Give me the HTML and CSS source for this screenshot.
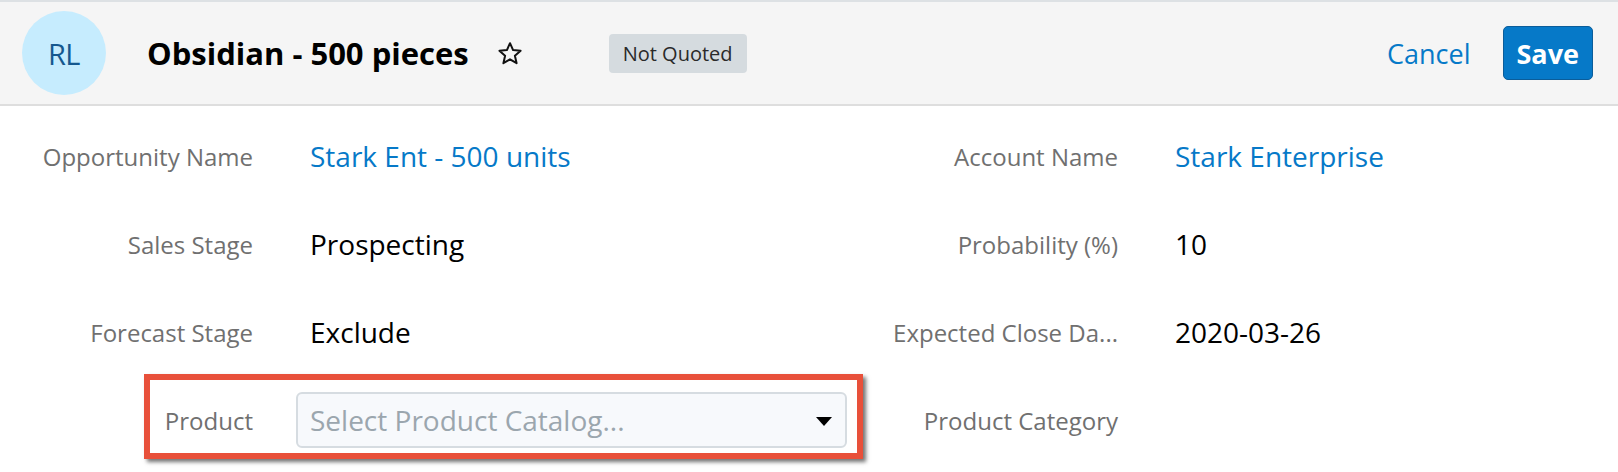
FILE: index.html
```html
<!DOCTYPE html>
<html lang="en">
<head>
<meta charset="utf-8">
<title>Obsidian - 500 pieces</title>
<link rel="stylesheet" href="styles.css">
</head>
<body>
<div class="record">
  <header class="record-header">
    <div class="avatar">RL</div>
    <h1 class="record-title">Obsidian - 500 pieces</h1>
    <span class="favorite" aria-label="Favorite">
      <svg width="26" height="25" viewBox="0 0 26 25" aria-hidden="true">
        <path d="M13 2.2 L16.1 9.1 L23.6 9.8 L17.9 14.8 L19.6 22.2 L13 18.3 L6.4 22.2 L8.1 14.8 L2.4 9.8 L9.9 9.1 Z" fill="none" stroke="#111" stroke-width="2" stroke-linejoin="round"/>
      </svg>
    </span>
    <span class="badge">Not Quoted</span>
    <div class="header-actions">
      <a class="btn-link" href="#">Cancel</a>
      <button class="btn-primary" type="button">Save</button>
    </div>
  </header>

  <section class="fields">
    <div class="field">
      <div class="field-label">Opportunity Name</div>
      <div class="field-value"><a class="link" href="#">Stark Ent - 500 units</a></div>
    </div>
    <div class="field">
      <div class="field-label">Account Name</div>
      <div class="field-value"><a class="link" href="#">Stark Enterprise</a></div>
    </div>

    <div class="field">
      <div class="field-label">Sales Stage</div>
      <div class="field-value">Prospecting</div>
    </div>
    <div class="field">
      <div class="field-label">Probability (%)</div>
      <div class="field-value">10</div>
    </div>

    <div class="field">
      <div class="field-label">Forecast Stage</div>
      <div class="field-value">Exclude</div>
    </div>
    <div class="field">
      <div class="field-label">Expected Close Da...</div>
      <div class="field-value">2020-03-26</div>
    </div>

    <div class="field field-highlight">
      <div class="field-label">Product</div>
      <div class="field-value field-value-edit">
        <div class="select">
          <span class="select-placeholder">Select Product Catalog...</span>
          <span class="select-caret"></span>
        </div>
      </div>
    </div>
    <div class="field">
      <div class="field-label">Product Category</div>
      <div class="field-value"></div>
    </div>
  </section>
</div>
</body>
</html>
```

FILE: styles.css
```css
* { box-sizing: border-box; }

html, body {
  margin: 0;
  padding: 0;
  background: #ffffff;
}

body {
  font-family: "Open Sans", "Noto Sans", "Liberation Sans", sans-serif;
  color: #000;
  width: 1618px;
  height: 472px;
  overflow: hidden;
}

.record-header {
  display: flex;
  align-items: center;
  height: 106px;
  padding: 0 25px 0 22px;
  background: #f5f5f5;
  border-top: 2px solid #dde1e4;
  border-bottom: 2px solid #dedede;
}

.avatar {
  flex: none;
  width: 84px;
  height: 84px;
  border-radius: 50%;
  background: #c6ecfe;
  color: #15588f;
  font-size: 29px;
  display: flex;
  align-items: center;
  justify-content: center;
  letter-spacing: -0.5px;
}

.record-title {
  margin: 0 0 0 41px;
  font-size: 31px;
  font-weight: 700;
  color: #000;
  line-height: 1;
  white-space: nowrap;
}

.favorite {
  display: flex;
  margin-left: 28px;
}

.badge {
  margin-left: 86px;
  height: 39px;
  padding: 0 14px;
  display: flex;
  align-items: center;
  background: #d5dbdf;
  border-radius: 4px;
  color: #2a2a2a;
  font-size: 20px;
}

.header-actions {
  margin-left: auto;
  display: flex;
  align-items: center;
  gap: 32px;
}

.btn-link {
  color: #0679c8;
  text-decoration: none;
  font-size: 27px;
}

.btn-primary {
  height: 54px;
  padding: 0 13px;
  background: #0679c8;
  border: 1px solid #0b5d9a;
  border-radius: 5px;
  color: #fff;
  font-family: inherit;
  font-weight: 700;
  font-size: 27px;
}

.fields {
  display: grid;
  grid-template-columns: 865px 1fr;
  grid-auto-rows: 88px;
  padding-top: 6px;
}

.field {
  position: relative;
  display: grid;
  grid-template-columns: 253px 1fr;
  column-gap: 43px;
  align-items: center;
}

.field-label {
  text-align: right;
  color: #707070;
  font-size: 24px;
  white-space: nowrap;
}

.field-value {
  padding-left: 14px;
  font-size: 28px;
  color: #000;
  white-space: nowrap;
}

.link {
  color: #0679c8;
  text-decoration: none;
}

.field-value-edit {
  padding-left: 0;
  padding-right: 18px;
}

.select {
  height: 56px;
  display: flex;
  align-items: center;
  justify-content: space-between;
  padding: 0 13px 0 12px;
  background: #f7f9fc;
  border: 2px solid #d6dce1;
  border-radius: 6px;
}

.select-placeholder {
  color: #9ba6ae;
  font-size: 28px;
}

.select-caret {
  width: 0;
  height: 0;
  border-left: 8px solid transparent;
  border-right: 8px solid transparent;
  border-top: 9px solid #000;
  margin-top: 2px;
}

.field-highlight::after {
  content: "";
  position: absolute;
  left: 144px;
  right: 2px;
  top: -2px;
  bottom: 5px;
  border: 6px solid #e8503a;
  box-shadow: 3px 3px 4px rgba(0, 0, 0, 0.55);
  pointer-events: none;
}
```
